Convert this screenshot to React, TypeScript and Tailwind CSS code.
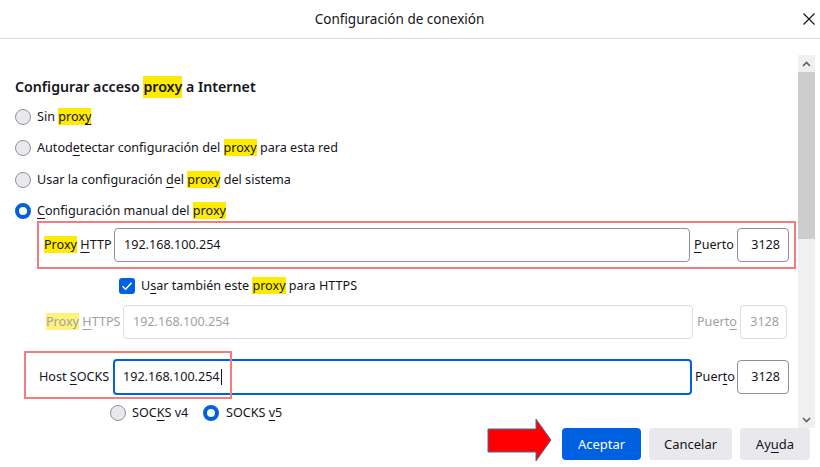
import React from "react";

const HL = ({ children, dim }: { children: React.ReactNode; dim?: boolean }) => (
  <span className={dim ? "bg-[#fff27a]" : "bg-[#ffeb00]"}>{children}</span>
);
const U = ({ children }: { children: React.ReactNode }) => (
  <span className="underline underline-offset-[3px] decoration-1">{children}</span>
);

const Radio = ({ on }: { on?: boolean }) =>
  on ? (
    <span className="w-4 h-4 rounded-full border-[4px] border-[#0061e0] bg-white shrink-0" />
  ) : (
    <span className="w-4 h-4 rounded-full border border-[#8f8f9d] bg-[#e9e9ed] shrink-0" />
  );

export default function App() {
  return (
    <div className="w-[820px] h-[467px] bg-white relative overflow-hidden text-[#15141a] font-['Noto_Sans',sans-serif] text-[12.6px]">
      {/* header */}
      <div className="h-[39px] border-b border-[#dcdcdc] flex items-center">
        <div className="flex-1 flex justify-center pr-[4px] text-[13.5px]">Configuración de conexión</div>
        <div className="w-[12px] h-[12px] mr-[5px]">
          <svg width="12" height="12" viewBox="0 0 12 12">
            <path d="M0.5 0.5 L11.5 11.5 M11.5 0.5 L0.5 11.5" stroke="#15141a" strokeWidth="1.2" />
          </svg>
        </div>
      </div>

      {/* main */}
      <div className="flex h-[389px]">
        <div className="flex-1 pl-[15px] overflow-hidden flex flex-col">
          <div className="mt-[37px] h-[22px] flex items-center text-[14.2px] font-semibold">
            Configurar acceso&nbsp;<HL>proxy</HL>&nbsp;a Internet
          </div>
          <div className="mt-[9px] h-[20px] flex items-center gap-[6px]">
            <Radio />
            <span>
              Sin <HL>prox<U>y</U></HL>
            </span>
          </div>
          <div className="mt-[11px] h-[20px] flex items-center gap-[6px]">
            <Radio />
            <span>
              Autod<U>e</U>tectar configuración del <HL>proxy</HL> para esta red
            </span>
          </div>
          <div className="mt-[12px] h-[20px] flex items-center gap-[6px]">
            <Radio />
            <span>
              Usar la configuración <U>d</U>el <HL>proxy</HL> del sistema
            </span>
          </div>
          <div className="mt-[11px] h-[20px] flex items-center gap-[6px]">
            <Radio on />
            <span>
              <U>C</U>onfiguración manual del <HL>proxy</HL>
            </span>
          </div>

          {/* HTTP row */}
          <div className="relative h-[48px] flex items-center shrink-0">
            <div className="absolute left-[22px] top-0 w-[759px] h-[48px] border-2 border-[#f47c7c]" />
            <span className="ml-[29px] w-[70px] whitespace-nowrap">
              <HL>Proxy</HL> <U>H</U>TTP
            </span>
            <div className="w-[576px] h-[34px] border border-[#8f8f9d] rounded-[4px] flex items-center pl-[9px]">
              192.168.100.254
            </div>
            <span className="ml-[4px] w-[43px]">
              <U>P</U>uerto
            </span>
            <div className="w-[52px] h-[34px] border border-[#8f8f9d] rounded-[4px] flex items-center justify-end pr-[8px]">
              3128
            </div>
          </div>

          {/* checkbox */}
          <div className="mt-[7px] h-[20px] flex items-center gap-[6px] ml-[104px]">
            <span className="w-4 h-4 rounded-[3px] bg-[#0061e0] flex items-center justify-center shrink-0">
              <svg width="12" height="12" viewBox="0 0 12 12">
                <path d="M1.5 6.2 L4.6 9.2 L10.5 2.8" stroke="white" strokeWidth="1.5" fill="none" />
              </svg>
            </span>
            <span>
              U<U>s</U>ar también este <HL>proxy</HL> para HTTPS
            </span>
          </div>

          {/* HTTPS row (disabled) */}
          <div className="mt-[9px] h-[34px] flex items-center shrink-0 text-[#a0a0a8]">
            <span className="ml-[31px] w-[77px] whitespace-nowrap">
              <HL dim>Proxy</HL> <U>H</U>TTPS
            </span>
            <div className="w-[570px] h-[34px] border border-[#dcdcde] rounded-[4px] flex items-center pl-[9px]">
              192.168.100.254
            </div>
            <span className="ml-[4px] w-[43px]">
              Puert<U>o</U>
            </span>
            <div className="w-[47px] h-[34px] border border-[#dcdcde] rounded-[4px] flex items-center justify-end pr-[7px]">
              3128
            </div>
          </div>

          {/* SOCKS row */}
          <div className="relative mt-[20px] h-[36px] flex items-center shrink-0">
            <span className="ml-[24px] w-[74px] whitespace-nowrap">
              Host <U>S</U>OCKS
            </span>
            <div className="w-[579px] h-[36px] border-2 border-[#0061e0] rounded-[4px] flex items-center pl-[8px]">
              192.168.100.254
              <span className="w-px h-[16px] bg-[#15141a] ml-[1px]" />
            </div>
            <span className="ml-[3px] w-[42px]">
              Puer<U>t</U>o
            </span>
            <div className="w-[52px] h-[34px] border border-[#8f8f9d] rounded-[4px] flex items-center justify-end pr-[8px]">
              3128
            </div>
            <div className="absolute left-[9px] top-[-8px] w-[208px] h-[48px] border-2 border-[#f47c7c]" />
          </div>

          {/* SOCKS version */}
          <div className="mt-[8px] h-[20px] flex items-center ml-[95px]">
            <div className="w-[93px] flex items-center gap-[6px]">
              <Radio />
              <span>
                SOC<U>K</U>S v4
              </span>
            </div>
            <div className="flex items-center gap-[7px]">
              <Radio on />
              <span>
                SOCKS <U>v</U>5
              </span>
            </div>
          </div>
        </div>

        {/* scrollbar */}
        <div className="w-[17px] mt-[16px] mr-[5px] flex flex-col bg-[#f0f0f0]">
          <div className="h-[17px] flex items-center justify-center">
            <svg width="9" height="6" viewBox="0 0 9 6">
              <path d="M1 5 L4.5 1.5 L8 5" stroke="#606060" strokeWidth="1.6" fill="none" />
            </svg>
          </div>
          <div className="h-[167px] bg-[#cdcdcd]" />
          <div className="flex-1" />
          <div className="h-[17px] flex items-center justify-center">
            <svg width="9" height="6" viewBox="0 0 9 6">
              <path d="M1 1 L4.5 4.5 L8 1" stroke="#606060" strokeWidth="1.6" fill="none" />
            </svg>
          </div>
        </div>
      </div>

      {/* footer */}
      <div className="h-[39px] flex justify-end items-start pr-[10px] gap-[8px] text-[13px]">
        <button className="w-[79px] h-[32px] pt-[2px] rounded-[4px] bg-[#0061e0] text-white">Aceptar</button>
        <button className="w-[83px] h-[32px] pt-[2px] rounded-[4px] bg-[#e9e9ed]">Cancelar</button>
        <button className="w-[70px] h-[32px] pt-[2px] rounded-[4px] bg-[#e9e9ed]">
          Ay<U>u</U>da
        </button>
      </div>

      {/* annotation arrow */}
      <svg className="absolute left-[486px] top-[417px]" width="70" height="47" viewBox="0 0 70 47">
        <path
          d="M2 12 L50 12 L50 2 L65 23 L50 44 L50 35 L2 35 Z"
          fill="#ff0000"
          stroke="#41719c"
          strokeWidth="1"
        />
      </svg>
    </div>
  );
}
